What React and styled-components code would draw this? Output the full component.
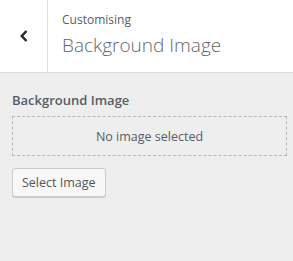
import React from "react";
import styled, { createGlobalStyle } from "styled-components";

const GlobalStyle = createGlobalStyle`
  html, body {
    margin: 0;
    padding: 0;
    background: #eeeeee;
  }
  body {
    font-family: "Open Sans", "Noto Sans", sans-serif;
  }
`;

const Panel = styled.div`
  width: 293px;
  height: 261px;
  display: flex;
  flex-direction: column;
  background: #eeeeee;
  overflow: hidden;
`;

const Header = styled.div`
  display: flex;
  height: 72px;
  background: #fff;
  border-bottom: 1px solid #dddddd;
  flex-shrink: 0;
`;

const BackButton = styled.button`
  width: 48px;
  border: 0;
  border-right: 1px solid #dddddd;
  background: #fff;
  padding: 0 0 0 1px;
  display: flex;
  align-items: center;
  justify-content: center;
  color: #23282d;
  cursor: pointer;
`;

const Titles = styled.div`
  display: flex;
  flex-direction: column;
  padding: 10px 0 0 14px;
`;

const Crumb = styled.span`
  font-size: 12px;
  line-height: 20px;
  color: #555d66;
`;

const Title = styled.h3`
  margin: 2px 0 0;
  font-size: 19px;
  line-height: 26px;
  font-weight: 300;
  color: #5f6770;
`;

const Body = styled.div`
  padding: 17px 6px 0 12px;
  display: flex;
  flex-direction: column;
  align-items: flex-start;
`;

const Label = styled.span`
  font-size: 13px;
  font-weight: 600;
  line-height: 20px;
  color: #555d66;
`;

const Placeholder = styled.div`
  box-sizing: border-box;
  margin-top: 6px;
  width: 100%;
  height: 40px;
  border: 1px dashed #b4b9be;
  display: flex;
  align-items: center;
  justify-content: center;
  font-size: 12.5px;
  color: #555d66;
`;

const SelectButton = styled.button`
  margin-top: 12px;
  height: 29px;
  padding: 0 9px;
  font-family: inherit;
  font-size: 12.5px;
  color: #555;
  background: #f7f7f7;
  border: 1px solid #cccccc;
  border-radius: 3px;
  box-shadow: 0 1px 0 #cccccc;
  cursor: pointer;
`;

function ChevronLeft() {
  return (
    <svg width="10" height="14" viewBox="0 0 10 14" aria-hidden="true">
      <path d="M7.5 2 L2.8 7 L7.5 12" fill="none" stroke="currentColor" strokeWidth="2.5" />
    </svg>
  );
}

export default function App() {
  return (
    <>
      <GlobalStyle />
      <Panel>
        <Header>
          <BackButton aria-label="Back">
            <ChevronLeft />
          </BackButton>
          <Titles>
            <Crumb>Customising</Crumb>
            <Title>Background Image</Title>
          </Titles>
        </Header>
        <Body>
          <Label>Background Image</Label>
          <Placeholder>No image selected</Placeholder>
          <SelectButton>Select Image</SelectButton>
        </Body>
      </Panel>
    </>
  );
}
